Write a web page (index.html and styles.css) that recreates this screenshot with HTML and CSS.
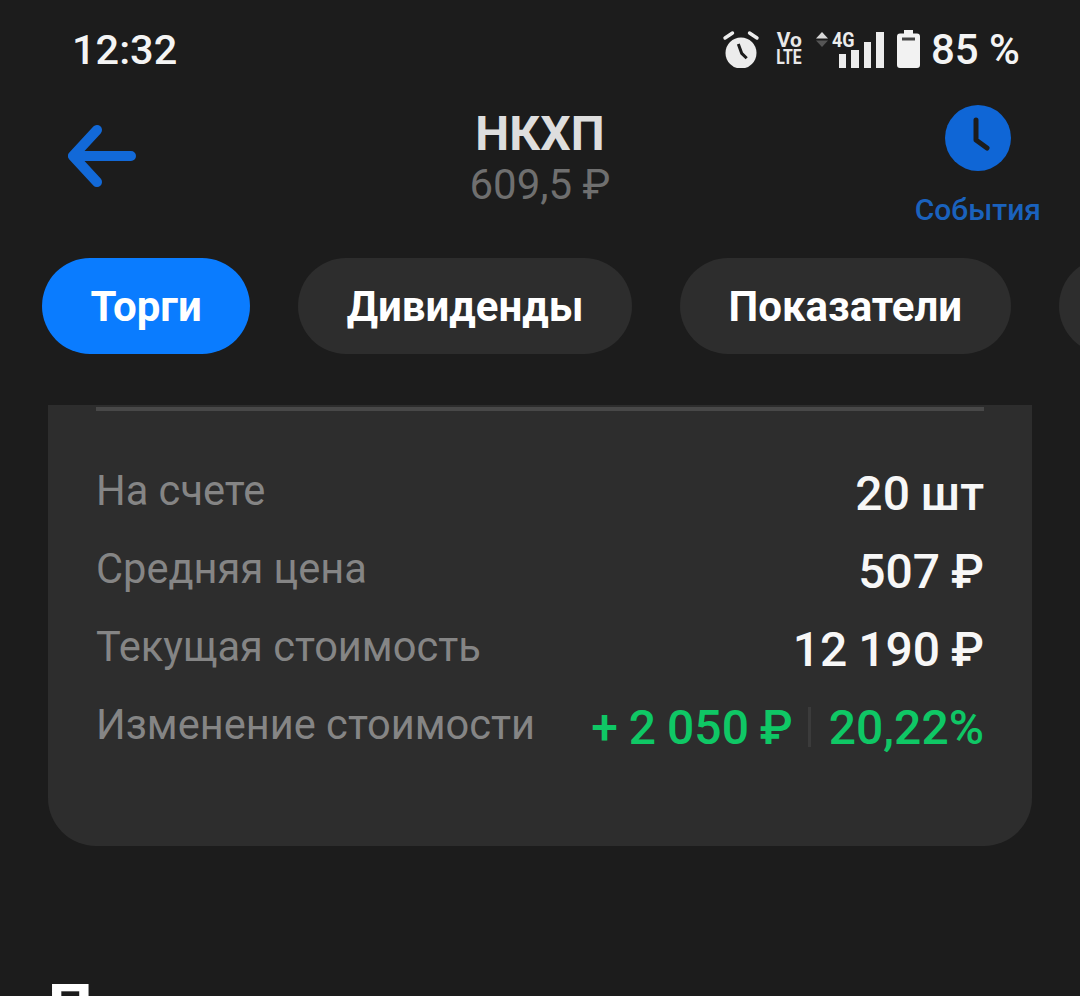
FILE: index.html
```html
<!DOCTYPE html>
<html lang="ru">

<head>
    <meta charset="UTF-8">
    <meta name="viewport" content="width=device-width, initial-scale=1.0">
    <title>НКХП</title>

    <link rel="stylesheet" href="styles.css">
</head>

<body>

    <div id="status">
        <span class="time">12:32</span>
        <div class="status-icons">
            <svg class="alarm" width="38" height="38" viewBox="0 0 38 38">
                <circle cx="19" cy="23" r="15.500" fill="#ececec" />
                <path d="M16.300 14 L19.700 23.300 L24.700 28.300" fill="none" stroke="#1c1c1c" stroke-width="3" />
                <path d="M3 8 L10.500 3 M35 8 L27.500 3" stroke="#ececec" stroke-width="3.400" stroke-linecap="round" />
            </svg>
            <div class="volte"><span>Vo</span><span>LTE</span></div>
            <div class="signal">
                <svg class="arrows" width="12" height="16" viewBox="0 0 12 16">
                    <path d="M6 0 L12 6.500 H0 Z" fill="#d8d8d8" />
                    <path d="M6 15 L12 8.500 H0 Z" fill="#555" />
                </svg>
                <span class="four-g">4G</span>
                <div class="bars">
                    <i class="bar1"></i>
                    <i class="bar2"></i>
                    <i class="bar3"></i>
                    <i class="bar4"></i>
                </div>
            </div>
            <svg class="battery" width="23" height="38" viewBox="0 0 23 38">
                <path d="M7 0 H16 V3.500 H20 Q23 3.500 23 6.500 V35 Q23 38 20 38 H3 Q0 38 0 35 V6.500 Q0 3.500 3 3.500 H7 Z" fill="#f2f2f2" />
                <rect x="5" y="7.500" width="13" height="3" fill="#444" />
            </svg>
            <span class="percent">85 %</span>
        </div>
    </div>

    <div id="header">
        <svg class="back" width="68" height="62" viewBox="0 0 68 62">
            <path d="M29 5 L5 31 L29 57 M6 31 H63" fill="none" stroke="#1269d8" stroke-width="10" stroke-linecap="round" stroke-linejoin="round" />
        </svg>
        <div class="title">
            <div class="ticker">НКХП</div>
            <div class="price">609,5 ₽</div>
        </div>
        <div class="events">
            <svg width="66" height="66" viewBox="0 0 66 66">
                <circle cx="33" cy="33" r="33" fill="#0f66d6" />
                <path d="M31 15 V35 L42 43" fill="none" stroke="#1c1c1c" stroke-width="5" stroke-linecap="round" stroke-linejoin="round" />
            </svg>
            <span>События</span>
        </div>
    </div>

    <div id="tabs">
        <button class="tab active">Торги</button>
        <button class="tab">Дивиденды</button>
        <button class="tab">Показатели</button>
        <button class="tab"></button>
    </div>

    <div id="card">
        <div class="line"></div>
        <div class="row">
            <span class="label">На счете</span>
            <span class="value">20 шт</span>
        </div>
        <div class="row">
            <span class="label">Средняя цена</span>
            <span class="value">507 ₽</span>
        </div>
        <div class="row">
            <span class="label">Текущая стоимость</span>
            <span class="value">12 190 ₽</span>
        </div>
        <div class="row">
            <span class="label">Изменение стоимости</span>
            <span class="value green">+ 2 050 ₽<i class="sep"></i>20,22%</span>
        </div>
    </div>

    <h2 class="next-title">П</h2>

</body>

</html>
```

FILE: styles.css
```css
body {
    margin: 0;
    height: 996px;
    overflow: hidden;
    background-color: #1c1c1c;
    color: white;
    font-family: Roboto, "Liberation Sans", sans-serif;
}

#status {
    display: flex;
    justify-content: space-between;
    align-items: center;
    height: 98px;
    padding: 0 60px 0 72px;
}

.time {
    font-size: 41.500px;
    font-weight: 500;
    color: #f4f4f4;
}

.status-icons {
    display: flex;
    align-items: center;
}

.alarm {
    margin-right: 17px;
}

.volte {
    display: flex;
    flex-direction: column;
    align-items: center;
    width: 25px;
    margin-right: 14px;
    font-size: 21px;
    font-weight: 700;
    line-height: 17px;
    color: #e8e8e8;
}

.volte span:last-child {
    transform: scaleX(.75);
}

.signal {
    position: relative;
    width: 68px;
    height: 38px;
    margin-right: 13px;
}

.arrows {
    position: absolute;
    left: 0;
    top: 2px;
}

.four-g {
    position: absolute;
    left: 16px;
    top: 0;
    font-size: 20px;
    line-height: 20px;
    font-weight: 700;
    color: #ececec;
    transform: scaleX(.9);
    transform-origin: left;
}

.bars {
    position: absolute;
    right: 0;
    bottom: 0;
    display: flex;
    align-items: flex-end;
    gap: 5px;
}

.bars i {
    width: 7.500px;
    background-color: #ececec;
}

.bar1 { height: 14px; }
.bar2 { height: 18px; }
.bar3 { height: 26px; }
.bar4 { height: 36px; }

.battery {
    margin-right: 11px;
}

.percent {
    font-size: 42px;
    font-weight: 500;
    color: #f4f4f4;
}

#header {
    position: relative;
    display: flex;
    justify-content: space-between;
    height: 154px;
    padding: 6px 39px 0 68px;
}

.back {
    margin-top: 21px;
}

.title {
    position: absolute;
    left: 0;
    right: 0;
    top: 6px;
    text-align: center;
}

.ticker {
    font-size: 48px;
    line-height: 60px;
    font-weight: 700;
    color: #dedede;
}

.price {
    font-size: 42px;
    line-height: 42px;
    color: #6f6f6f;
}

.events {
    display: flex;
    flex-direction: column;
    align-items: center;
    gap: 21px;
    margin-top: 1px;
    font-size: 30px;
    line-height: 36px;
    font-weight: 500;
    color: #1a62bd;
}

#tabs {
    display: flex;
    gap: 48px;
    height: 96px;
    padding-left: 42px;
}

.tab {
    flex-shrink: 0;
    height: 96px;
    min-width: 96px;
    padding: 0 48.500px;
    border: none;
    border-radius: 48px;
    background-color: #2d2d2d;
    color: white;
    font-family: inherit;
    font-size: 42px;
    font-weight: 700;
}

.active {
    background-color: #0a7cff;
}

#card {
    height: 441px;
    box-sizing: border-box;
    margin: 51px 48px 0;
    padding: 2px 48px 0;
    border-radius: 0 0 48px 48px;
    background-color: #2d2d2d;
}

.line {
    height: 4px;
    margin-bottom: 43px;
    background-color: #484848;
}

.row {
    display: flex;
    justify-content: space-between;
    align-items: center;
    height: 78px;
}

.label {
    margin-top: -6px;
    font-size: 41.600px;
    color: #858585;
}

.value {
    display: flex;
    align-items: center;
    font-size: 48px;
    font-weight: 500;
    word-spacing: -1px;
    color: #f7f7f7;
}

.green {
    color: #0fc765;
}

.sep {
    width: 3px;
    height: 40px;
    margin: 0 18px 0 15px;
    background-color: #3b3b3b;
}

.next-title {
    margin: 130px 0 0 48px;
    font-size: 63px;
    line-height: 63px;
    font-weight: 700;
}
```
